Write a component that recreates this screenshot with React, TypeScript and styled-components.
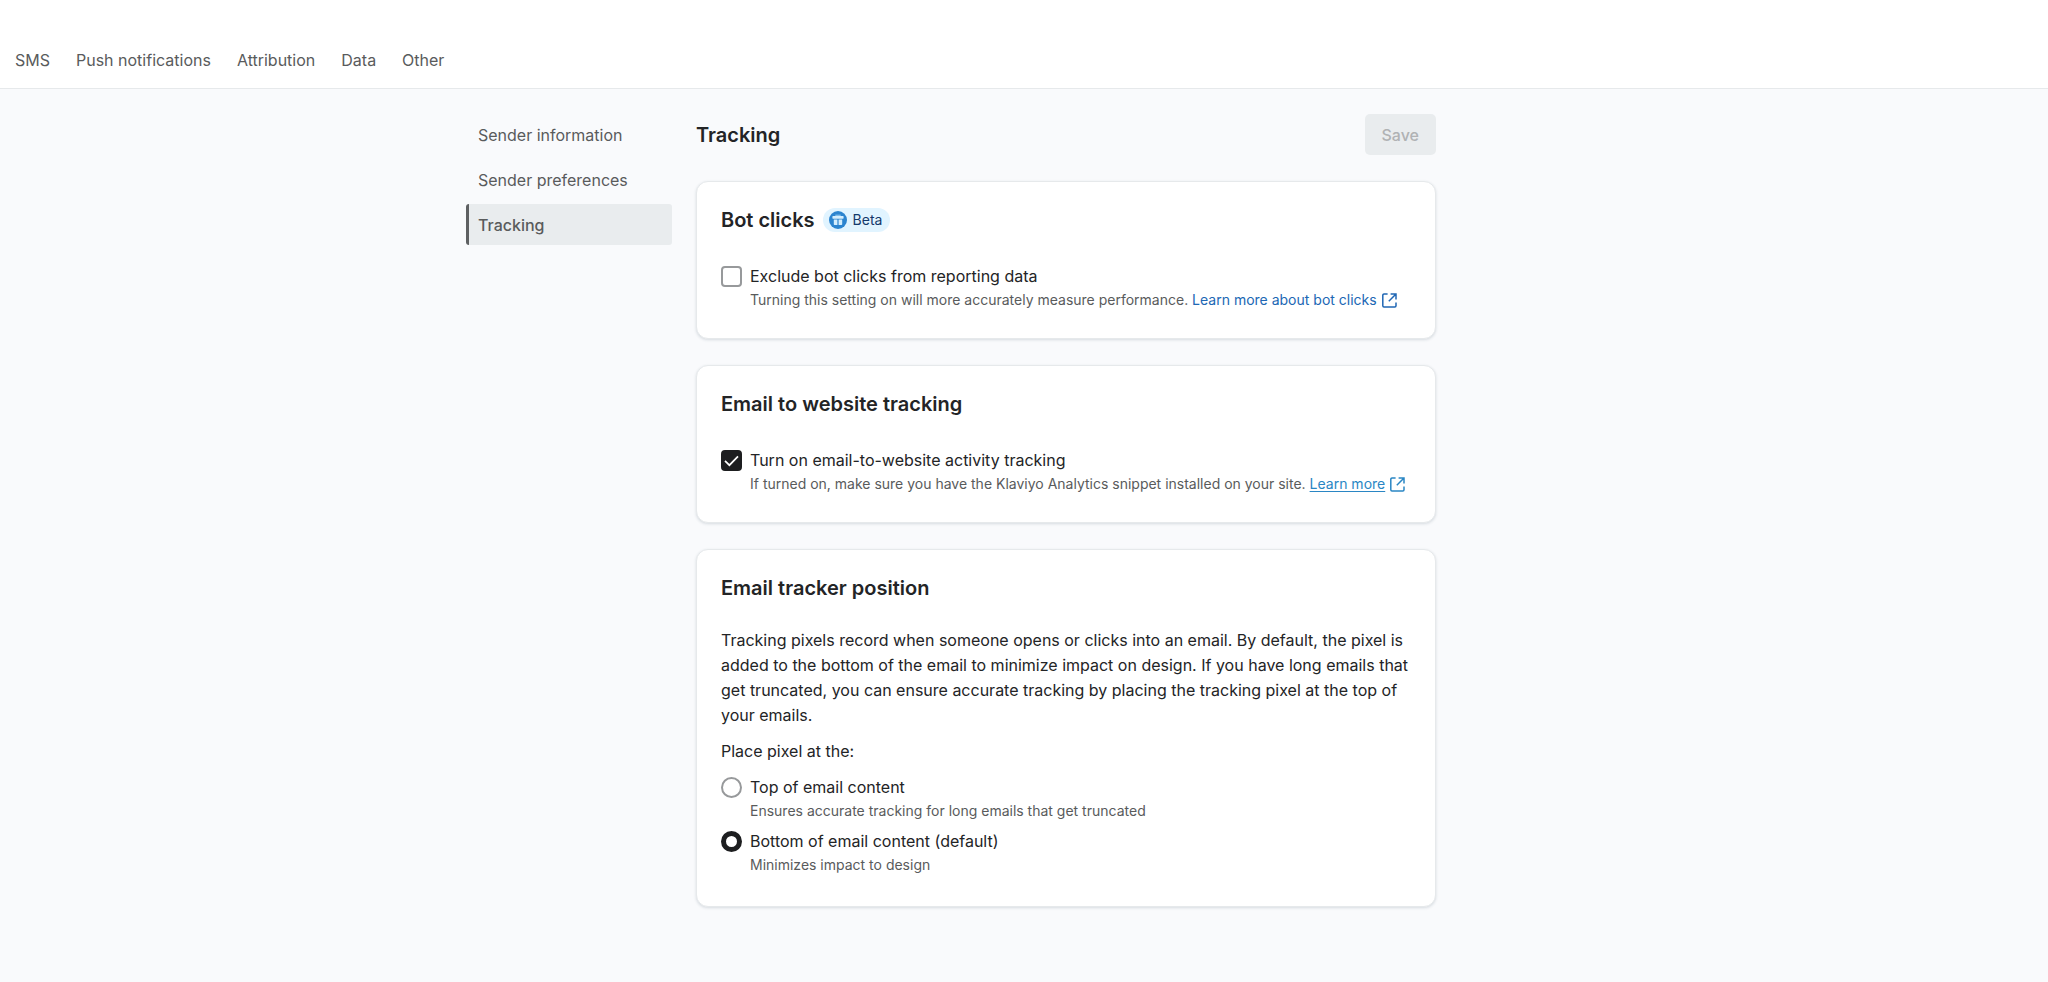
import React, { useState } from "react";
import styled, { createGlobalStyle, css } from "styled-components";

const colors = {
  page: "#f9fafc",
  surface: "#ffffff",
  line: "#e6e9eb",
  fill: "#e9ecee",
  text: "#232426",
  muted: "#595b5c",
  disabled: "#b0b2b4",
  link: "#2067b4",
  linkLight: "#2a86c4",
};

const GlobalStyle = createGlobalStyle`
  *, *::before, *::after { box-sizing: border-box; }
  body {
    margin: 0;
    background: ${colors.page};
    color: ${colors.text};
    font-family: Inter, "Liberation Sans", sans-serif;
    font-size: 16px;
    line-height: 24px;
    -webkit-font-smoothing: antialiased;
  }
  h1, h2, p, fieldset, legend, ul { margin: 0; padding: 0; }
  ul { list-style: none; }
  fieldset { border: 0; min-width: 0; }
`;

const Header = styled.header`
  padding: 48px 15px 16px;
  background: ${colors.surface};
  border-bottom: 1px solid ${colors.line};
`;

const Tabs = styled.ul`
  display: flex;
  gap: 26px;
`;

const Tab = styled.a`
  display: block;
  color: ${colors.muted};
  text-decoration: none;
`;

const Layout = styled.div`
  display: grid;
  grid-template-columns: 206px minmax(0, 740px);
  column-gap: 24px;
  align-items: start;
  max-width: 1116px;
  margin: 0 auto;
  padding: 25px 0 56px;
`;

const SideList = styled.ul`
  display: flex;
  flex-direction: column;
  gap: 4px;
`;

const SideLink = styled.a<{ $active?: boolean }>`
  display: flex;
  align-items: center;
  height: 41px;
  padding-left: 9px;
  border-left: 3px solid transparent;
  border-radius: 3px;
  color: ${colors.muted};
  text-decoration: none;
  ${(p) =>
    p.$active &&
    css`
      border-left-color: #5e6062;
      background: ${colors.fill};
      font-weight: 500;
    `}
`;

const Content = styled.main`
  display: flex;
  flex-direction: column;
  gap: 26px;
`;

const TitleBar = styled.div`
  display: flex;
  align-items: center;
  justify-content: space-between;
`;

const PageTitle = styled.h1`
  font-size: 20px;
  line-height: 28px;
  font-weight: 600;
`;

const SaveButton = styled.button`
  height: 41px;
  padding: 0 17px;
  border: 0;
  border-radius: 5px;
  background: ${colors.fill};
  color: ${colors.disabled};
  font: inherit;
  font-weight: 500;
`;

const Card = styled.section<{ $tall?: boolean }>`
  padding: 24px 16px ${(p) => (p.$tall ? 31 : 28)}px 24px;
  border: 1px solid ${colors.line};
  border-radius: 12px;
  background: ${colors.surface};
  box-shadow: 0 1px 3px rgba(40, 60, 80, 0.16);
`;

const CardHead = styled.div<{ $tight?: boolean }>`
  display: flex;
  align-items: center;
  gap: 8px;
  margin-bottom: ${(p) => (p.$tight ? 26 : 30)}px;
`;

const CardTitle = styled.h2`
  font-size: 20px;
  line-height: 28px;
  font-weight: 600;
`;

const Badge = styled.span`
  display: flex;
  align-items: center;
  gap: 6px;
  height: 24px;
  padding: 0 8px 0 6px;
  border-radius: 12px;
  background: #e1f4ff;
  color: #14396b;
  font-size: 14px;
`;

const Paragraph = styled.p`
  line-height: 25px;
  margin-bottom: 11px;
`;

const Legend = styled.legend`
  line-height: 25px;
  margin-bottom: 11px;
`;

const Field = styled.div`
  display: grid;
  grid-template-columns: 21px minmax(0, 1fr);
  column-gap: 8px;
  align-items: center;

  & + & {
    margin-top: 8px;
  }
`;

const FieldLabel = styled.label`
  line-height: 25px;
`;

const Help = styled.p`
  grid-column: 2;
  color: ${colors.muted};
  font-size: 14px;
  line-height: 21px;
`;

const controlBase = css`
  appearance: none;
  width: 21px;
  height: 21px;
  margin: 0;
  border: 2px solid #97999b;
  background: ${colors.surface};
`;

const CheckCell = styled.span`
  display: grid;

  & > * {
    grid-area: 1 / 1;
  }
`;

const Checkbox = styled.input`
  ${controlBase}
  border-radius: 4px;

  &:checked {
    border-color: #1d1e20;
    background: #1d1e20;
  }
`;

const Tick = styled.svg`
  z-index: 1;
  pointer-events: none;
`;

const Radio = styled.input`
  ${controlBase}
  border-radius: 50%;

  &:checked {
    border: 5px solid #1d1e20;
  }
`;

const HelpLink = styled.a<{ $light?: boolean }>`
  color: ${(p) => (p.$light ? colors.linkLight : colors.link)};
  text-decoration: none;
  white-space: nowrap;

  & > span {
    text-decoration: ${(p) => (p.$light ? "underline" : "none")};
    text-underline-offset: 2px;
  }

  & > svg {
    margin-left: 5px;
    vertical-align: -3px;
  }
`;

const ExternalIcon = () => (
  <svg width="15" height="15" viewBox="0 0 15 15" fill="none" stroke="currentColor" strokeWidth="1.5" aria-hidden="true">
    <path d="M5.6 1H2a1.2 1.2 0 0 0-1.2 1.2v10.6A1.2 1.2 0 0 0 2 14h10.8a1.2 1.2 0 0 0 1.2-1.2V9.4" />
    <path d="M8.6 1H14v5.4M14 1 6.8 8.2" />
  </svg>
);

const GiftIcon = () => (
  <svg width="18" height="18" viewBox="0 0 18 18" aria-hidden="true">
    <circle cx="9" cy="9" r="9" fill="#2b84cf" />
    <path d="M6.3 3.6h5.4v1.5H6.3z" fill="#7fbdea" />
    <rect x="3.4" y="5.1" width="11.2" height="2.6" rx="0.6" fill="#d3edfd" />
    <path d="M4.8 8.5h3.6v5.6H5.6a.8.8 0 0 1-.8-.8zM9.6 8.5h3.6v4.8a.8.8 0 0 1-.8.8H9.6z" fill="#d3edfd" />
  </svg>
);

const tabs = ["SMS", "Push notifications", "Attribution", "Data", "Other"];
const sections = ["Sender information", "Sender preferences", "Tracking"];
const positions = [
  { id: "top", label: "Top of email content", help: "Ensures accurate tracking for long emails that get truncated" },
  { id: "bottom", label: "Bottom of email content (default)", help: "Minimizes impact to design" },
];

interface CheckFieldProps {
  id: string;
  label: string;
  initial: boolean;
  children: React.ReactNode;
}

function CheckField({ id, label, initial, children }: CheckFieldProps) {
  const [checked, setChecked] = useState(initial);
  return (
    <Field>
      <CheckCell>
        <Checkbox
          type="checkbox"
          id={id}
          checked={checked}
          aria-describedby={`${id}-help`}
          onChange={(e) => setChecked(e.target.checked)}
        />
        {checked && (
          <Tick width="21" height="21" viewBox="0 0 21 21" fill="none" stroke="#fff" strokeWidth="1.7" aria-hidden="true">
            <path d="m4 10.8 4.4 4.4 8.6-8.8" />
          </Tick>
        )}
      </CheckCell>
      <FieldLabel htmlFor={id}>{label}</FieldLabel>
      <Help id={`${id}-help`}>{children}</Help>
    </Field>
  );
}

export default function App() {
  const [position, setPosition] = useState("bottom");

  return (
    <>
      <GlobalStyle />
      <Header>
        <nav aria-label="Settings">
          <Tabs>
            {tabs.map((t) => (
              <li key={t}>
                <Tab href="#">{t}</Tab>
              </li>
            ))}
          </Tabs>
        </nav>
      </Header>
      <Layout>
        <nav aria-label="Email settings">
          <SideList>
            {sections.map((s) => (
              <li key={s}>
                <SideLink href="#" $active={s === "Tracking"} aria-current={s === "Tracking" ? "page" : undefined}>
                  {s}
                </SideLink>
              </li>
            ))}
          </SideList>
        </nav>
        <Content>
          <TitleBar>
            <PageTitle>Tracking</PageTitle>
            <SaveButton type="button" disabled>
              Save
            </SaveButton>
          </TitleBar>

          <Card>
            <CardHead>
              <CardTitle>Bot clicks</CardTitle>
              <Badge>
                <GiftIcon />
                Beta
              </Badge>
            </CardHead>
            <CheckField id="bots" label="Exclude bot clicks from reporting data" initial={false}>
              Turning this setting on will more accurately measure performance.{" "}
              <HelpLink href="#">
                <span>Learn more about bot clicks</span>
                <ExternalIcon />
              </HelpLink>
            </CheckField>
          </Card>

          <Card>
            <CardHead>
              <CardTitle>Email to website tracking</CardTitle>
            </CardHead>
            <CheckField id="website" label="Turn on email-to-website activity tracking" initial>
              If turned on, make sure you have the Klaviyo Analytics snippet installed on your site.{" "}
              <HelpLink href="#" $light>
                <span>Learn more</span>
                <ExternalIcon />
              </HelpLink>
            </CheckField>
          </Card>

          <Card $tall>
            <CardHead $tight>
              <CardTitle>Email tracker position</CardTitle>
            </CardHead>
            <Paragraph>
              Tracking pixels record when someone opens or clicks into an email. By default, the pixel is added to the
              bottom of the email to minimize impact on design. If you have long emails that get truncated, you can
              ensure accurate tracking by placing the tracking pixel at the top of your emails.
            </Paragraph>
            <fieldset>
              <Legend>Place pixel at the:</Legend>
              {positions.map((p) => (
                <Field key={p.id}>
                  <Radio
                    type="radio"
                    name="position"
                    id={p.id}
                    checked={position === p.id}
                    aria-describedby={`${p.id}-help`}
                    onChange={() => setPosition(p.id)}
                  />
                  <FieldLabel htmlFor={p.id}>{p.label}</FieldLabel>
                  <Help id={`${p.id}-help`}>{p.help}</Help>
                </Field>
              ))}
            </fieldset>
          </Card>
        </Content>
      </Layout>
    </>
  );
}
